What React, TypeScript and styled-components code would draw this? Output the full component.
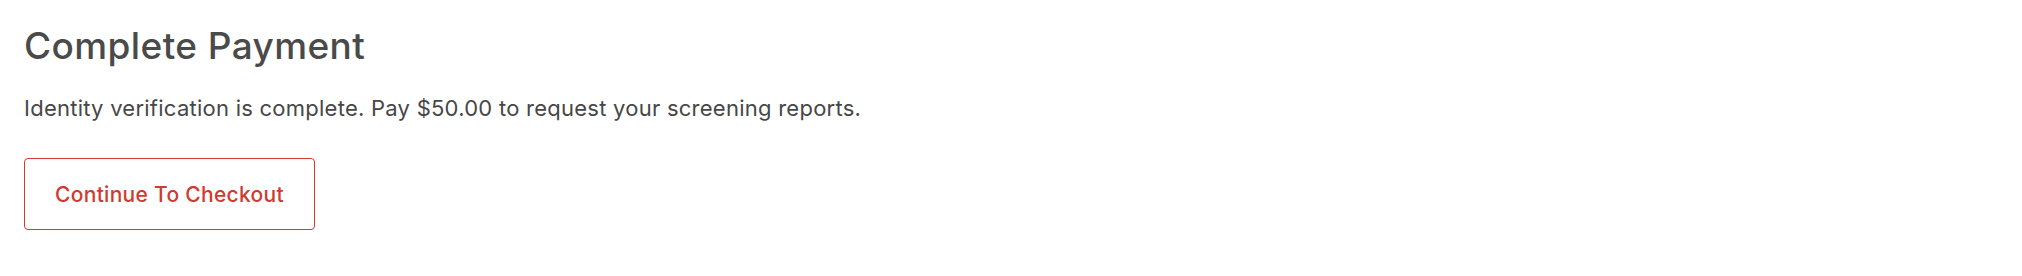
import styled, { createGlobalStyle } from "styled-components";

const Global = createGlobalStyle`
  body {
    margin: 0;
    background: #ffffff;
    font-family: Inter, "Noto Sans", sans-serif;
  }
`

const Page = styled.div`
  padding: 24px 24px;
  display: flex;
  flex-direction: column;
  align-items: flex-start;
`

const Title = styled.h1`
  margin: 0;
  font-size: 37px;
  font-weight: 500;
  color: #4a4a4a;
  letter-spacing: 0.4px;
  line-height: 44px;
`

const Text = styled.p`
  margin: 25px 0 0;
  font-size: 22px;
  color: #474747;
  letter-spacing: 0.25px;
  line-height: 30px;
`

const Button = styled.button`
  margin-top: 35px;
  width: 291px;
  height: 72px;
  background: #fff;
  border: 1px solid #d03a2f;
  border-radius: 4px;
  color: #d03a2f;
  font-family: inherit;
  font-size: 21px;
  font-weight: 500;
  letter-spacing: 0.3px;
  cursor: pointer;
`

const App = () => {
  return (
    <Page>
      <Global />
      <Title>Complete Payment</Title>
      <Text>Identity verification is complete. Pay $50.00 to request your screening reports.</Text>
      <Button>Continue To Checkout</Button>
    </Page>
  )
}

export default App;
